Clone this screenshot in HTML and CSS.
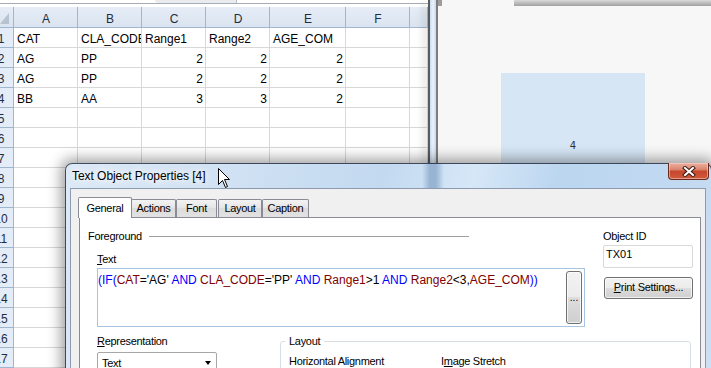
FILE: index.html
```html
<!DOCTYPE html>
<html>
<head>
<meta charset="utf-8">
<link rel="stylesheet" href="styles.css">
</head>
<body>
<div class="screen">
  <div class="excel">
    <div class="xl-top"><div class="xl-fbox"></div></div>
    <div class="sheet">
      <div class="corner"><svg width="13" height="20" viewBox="0 0 13 20"><polygon points="0,17 9,17 9,6" fill="#b8c3d1"/></svg></div>
      <div class="ch">A</div><div class="ch">B</div><div class="ch">C</div><div class="ch">D</div><div class="ch">E</div><div class="ch">F</div><div class="ch"></div>

      <div class="rh"><span>1</span></div><div>CAT</div><div>CLA_CODE</div><div>Range1</div><div>Range2</div><div>AGE_COM</div><div></div><div></div>
      <div class="rh"><span>2</span></div><div>AG</div><div>PP</div><div class="n">2</div><div class="n">2</div><div class="n">2</div><div></div><div></div>
      <div class="rh"><span>3</span></div><div>AG</div><div>PP</div><div class="n">2</div><div class="n">2</div><div class="n">2</div><div></div><div></div>
      <div class="rh"><span>4</span></div><div>BB</div><div>AA</div><div class="n">3</div><div class="n">3</div><div class="n">2</div><div></div><div></div>
      <div class="rh"><span>5</span></div><div></div><div></div><div></div><div></div><div></div><div></div><div></div>
      <div class="rh"><span>6</span></div><div></div><div></div><div></div><div></div><div></div><div></div><div></div>
      <div class="rh"><span>7</span></div><div></div><div></div><div></div><div></div><div></div><div></div><div></div>
      <div class="rh"><span>8</span></div><div></div><div></div><div></div><div></div><div></div><div></div><div></div>
      <div class="rh"><span>9</span></div><div></div><div></div><div></div><div></div><div></div><div></div><div></div>
      <div class="rh"><span>10</span></div><div></div><div></div><div></div><div></div><div></div><div></div><div></div>
      <div class="rh"><span>11</span></div><div></div><div></div><div></div><div></div><div></div><div></div><div></div>
      <div class="rh"><span>12</span></div><div></div><div></div><div></div><div></div><div></div><div></div><div></div>
      <div class="rh"><span>13</span></div><div></div><div></div><div></div><div></div><div></div><div></div><div></div>
      <div class="rh"><span>14</span></div><div></div><div></div><div></div><div></div><div></div><div></div><div></div>
      <div class="rh"><span>15</span></div><div></div><div></div><div></div><div></div><div></div><div></div><div></div>
      <div class="rh"><span>16</span></div><div></div><div></div><div></div><div></div><div></div><div></div><div></div>
      <div class="rh"><span>17</span></div><div></div><div></div><div></div><div></div><div></div><div></div><div></div>
      <div class="rh"><span>18</span></div><div></div><div></div><div></div><div></div><div></div><div></div><div></div>
    </div>
  </div>
  <div class="divider"></div>
  <div class="qv">
    <div class="qv-top"><div class="qv-top-a"></div><div class="qv-top-b"></div><div class="qv-top-c"></div></div>
    <div class="qv-box"><span>4</span></div>
  </div>

  <div class="dialog">
    <div class="titlebar">
      <span class="title">Text Object Properties [4]</span>
      <div class="close"><svg width="14" height="11" viewBox="0 0 14 11"><path d="M3 2 L11 9 M11 2 L3 9" stroke="#3b1a12" stroke-width="4" stroke-linecap="square"/><path d="M3 2 L11 9 M11 2 L3 9" stroke="#fff" stroke-width="2" stroke-linecap="square"/></svg></div>
    </div>
    <div class="client">
      <div class="tabs">
        <div class="tab sel">General</div>
        <div class="tab t-actions">Actions</div>
        <div class="tab t-font">Font</div>
        <div class="tab t-layout">Layout</div>
        <div class="tab t-caption">Caption</div>
      </div>
      <div class="panel">
        <div class="left">
          <div class="fg-row"><span>Foreground</span><div class="fg-line"></div></div>
          <div class="indent">
            <div class="lbl text-lbl"><u>T</u>ext</div>
            <div class="textbox">
              <div class="expr"><span class="kw">(IF(</span><span class="fld">CAT</span><span class="op">='AG'</span><span class="kw"> AND </span><span class="fld">CLA_CODE</span><span class="op">='PP'</span><span class="kw"> AND </span><span class="fld">Range1</span><span class="op">&gt;1</span><span class="kw"> AND </span><span class="fld">Range2</span><span class="op">&lt;3,</span><span class="fld">AGE_COM</span><span class="kw">))</span></div>
              <div class="ell">...</div>
            </div>
            <div class="rep-row">
              <div class="rep">
                <div class="lbl"><u>R</u>epresentation</div>
                <div class="select"><span>Text</span><span class="arrow"></span></div>
              </div>
              <fieldset class="group">
                <legend>Layout</legend>
                <div class="group-row"><span class="ha">Horizontal Alignment</span><span>I<u>m</u>age Stretch</span></div>
              </fieldset>
            </div>
          </div>
        </div>
        <div class="right">
          <div class="lbl">Ob<u>j</u>ect ID</div>
          <div class="oid-input">TX01</div>
          <div class="print-btn"><u>P</u>rint Settings...</div>
        </div>
      </div>
    </div>
  </div>

  <svg class="cursor" width="13" height="21" viewBox="0 0 13 21"><path d="M0.5 0.5 V16.5 L4.5 12.5 L7.5 19.5 L9.5 18.5 L6.5 11.5 H11.5 Z" fill="#fff" stroke="#000" stroke-linejoin="miter"/></svg>
</div>
</body>
</html>
```

FILE: styles.css
```css
html, body {
  margin: 0;
  padding: 0;
}
body {
  width: 711px;
  height: 368px;
  overflow: hidden;
  font-family: "Liberation Sans", Arial, sans-serif;
}
.screen {
  display: flex;
  width: 711px;
  height: 368px;
  position: relative;
  overflow: hidden;
  background: #fff;
}

/* ---------- Excel ---------- */
.excel {
  width: 428px;
  flex: none;
  background: #fff;
}
.xl-top {
  height: 3px;
  border-bottom: 1px solid #a7adb5;
  display: flex;
}
.xl-fbox {
  margin-left: 155px;
  width: 81px;
  height: 3px;
  background: #e9ebee;
  border-right: 1px solid #b9bec5;
  border-radius: 0 0 0 3px;
}
.sheet {
  margin-top: 3px;
  display: grid;
  grid-template-columns: 14px 64px 64px 64px 64px 76px 64px 18px;
  grid-template-rows: 21px;
  grid-auto-rows: 20px;
  font-size: 12px;
  color: #000;
}
.sheet > div {
  box-sizing: border-box;
  border-right: 1px solid #d8d8d8;
  border-bottom: 1px solid #d8d8d8;
  overflow: hidden;
  white-space: nowrap;
  line-height: 16px;
  padding: 3px 2px 0 3px;
}
.sheet > .n {
  text-align: right;
}
.sheet > .ch {
  background: linear-gradient(#e6edf7, #dae4f0);
  border-color: #9eb6ce;
  text-align: center;
  padding-top: 4px;
  color: #1f2d3d;
}
.sheet > .corner {
  background: linear-gradient(#e6edf7, #dae4f0);
  border-color: #9eb6ce;
  padding: 0;
}
.corner svg {
  display: block;
}
.sheet > .rh {
  background: #e4ecf7;
  border-color: #9eb6ce;
  padding: 3px 0 0 0;
  color: #1f2d3d;
}
.rh span {
  display: block;
  width: 26px;
  margin-left: -12px;
  text-align: center;
}

.divider {
  width: 10px;
  flex: none;
  background: linear-gradient(to right, #5a5a5a 0, #5a5a5a 2px, #cadcf1 2px, #e9f2fc 5px, #c6d9ee 8px, #7d7d7d 8px, #7d7d7d 10px);
  box-shadow: -7px 0 8px -4px rgba(0, 0, 0, 0.35);
  position: relative;
  z-index: 1;
}

/* ---------- QlikView sheet ---------- */
.qv {
  flex: 1;
  background: #f7f7f7;
}
.qv-top {
  display: flex;
  height: 6px;
}
.qv-top-a {
  width: 4px;
  background: #9c9c9c;
}
.qv-top-b {
  width: 72px;
}
.qv-top-c {
  flex: 1;
  background: linear-gradient(#dadada, #a0a0a0);
}
.qv-box {
  margin: 67px 0 0 63px;
  width: 144px;
  height: 144px;
  background: #d6e6f5;
  display: flex;
  align-items: center;
  justify-content: center;
  font-family: "DejaVu Sans", sans-serif;
  font-size: 10px;
  color: #333;
}

/* ---------- Dialog ---------- */
.dialog {
  position: absolute;
  left: 65px;
  top: 163px;
  width: 647px;
  height: 240px;
  box-sizing: border-box;
  border: 1px solid rgba(35, 45, 65, 0.85);
  border-radius: 7px 7px 0 0;
  background:
    linear-gradient(to right, rgba(120, 160, 200, 0) 0, rgba(120, 160, 200, 0) 356px, rgba(85, 125, 170, 0.45) 364px, rgba(85, 125, 170, 0.45) 370px, rgba(120, 160, 200, 0) 378px),
    linear-gradient(105deg, #dce9f6 0%, #cfe1f3 25%, #c3d9f0 45%, #d6e7f7 58%, #bcd6f0 70%, #c2d9f1 88%, #cde0f4 100%);
  box-shadow: 0 0 14px 4px rgba(0, 0, 0, 0.38);
  z-index: 2;
  font-size: 11px;
  color: #000;
}
.titlebar {
  height: 24px;
  display: flex;
  align-items: center;
  padding-left: 6px;
}
.title {
  font-size: 12px;
  letter-spacing: -0.05px;
  text-shadow: 0 0 6px #fff, 0 0 10px #fff, 0 0 14px rgba(255, 255, 255, 0.9);
}
.close {
  margin-left: auto;
  margin-right: 2px;
  align-self: flex-start;
  margin-top: -1px;
  width: 41px;
  height: 17px;
  box-sizing: border-box;
  border: 1px solid #6a2a1e;
  border-top: none;
  border-radius: 0 0 4px 4px;
  background: linear-gradient(#eab0a2 0%, #dc8670 40%, #c7472d 52%, #cf5a3c 100%);
  display: flex;
  align-items: center;
  justify-content: center;
  box-shadow: inset 0 0 0 1px rgba(255, 220, 210, 0.5);
}
.close svg {
  display: block;
}
.client {
  margin: 0 5px 0 4px;
  height: 220px;
  box-sizing: border-box;
  border: 1px solid #8c9bb0;
  background: #f0f0f0;
  padding: 8px 4px 0 8px;
  letter-spacing: -0.3px;
}
.tabs {
  display: flex;
  align-items: flex-end;
  height: 20px;
  margin-left: -1px;
}
.tab {
  box-sizing: border-box;
  height: 18px;
  border: 1px solid #898c95;
  border-bottom: none;
  background: linear-gradient(#f3f3f3, #e4e4e4 50%, #dcdcdc 50%, #e2e2e2);
  text-align: center;
  line-height: 14px;
  padding-top: 1px;
  border-radius: 2px 2px 0 0;
}
.tab.sel {
  width: 54px;
  height: 21px;
  margin-bottom: -1px;
  background: #fff;
  padding-top: 3px;
  position: relative;
  z-index: 1;
}
.t-actions {
  width: 45px;
  margin-left: -1px;
}
.t-font {
  width: 41px;
}
.t-layout {
  width: 44px;
  margin-left: 1px;
}
.t-caption {
  width: 47px;
}
.panel {
  height: 180px;
  box-sizing: border-box;
  border: 1px solid #898c95;
  background: #fff;
  padding: 11px 0 0 8px;
  display: flex;
}
.left {
  width: 497px;
  flex: none;
}
.right {
  margin-left: 18px;
  width: 90px;
  flex: none;
}
.fg-row {
  display: flex;
  align-items: center;
  height: 14px;
  line-height: 14px;
}
.fg-line {
  flex: none;
  width: 320px;
  height: 1px;
  background: #a0a0a0;
  margin-left: 7px;
}
.indent {
  margin-left: 9px;
}
.lbl {
  line-height: 14px;
  height: 14px;
  white-space: nowrap;
}
.text-lbl {
  margin-top: 9px;
}
.textbox {
  margin-top: 2px;
  width: 488px;
  height: 59px;
  box-sizing: border-box;
  border: 1px solid #a9c4e2;
  display: flex;
}
.expr {
  flex: 1;
  padding: 4px 0 0 0;
  font-size: 12px;
  line-height: 14px;
  letter-spacing: 0;
  white-space: nowrap;
}
.kw {
  color: #0000ff;
}
.fld {
  color: #800000;
}
.op {
  color: #000;
}
.ell {
  width: 16px;
  height: 53px;
  margin: 2px 2px 0 0;
  box-sizing: border-box;
  border: 1px solid #707070;
  border-radius: 3px;
  background: linear-gradient(#f2f2f2, #ebebeb 50%, #dddddd 50%, #cfcfcf);
  box-shadow: inset 0 0 0 1px rgba(255, 255, 255, 0.7);
  display: flex;
  align-items: center;
  justify-content: center;
  letter-spacing: 0;
  font-size: 10px;
}
.rep-row {
  display: flex;
  margin-top: 7px;
}
.rep {
  width: 120px;
  flex: none;
}
.select {
  margin-top: 4px;
  height: 22px;
  box-sizing: border-box;
  border: 1px solid #a7a7a7;
  border-radius: 2px;
  background: #fff;
  display: flex;
  align-items: center;
  justify-content: space-between;
  padding: 0 5px 0 4px;
  line-height: 14px;
}
.arrow {
  width: 0;
  height: 0;
  border-left: 3.5px solid transparent;
  border-right: 3.5px solid transparent;
  border-top: 4px solid #000;
}
.group {
  flex: none;
  margin: 0 0 0 63px;
  padding: 0 0 0 4px;
  width: 411px;
  height: 60px;
  box-sizing: border-box;
  border: 1px solid #d5dfe5;
  border-radius: 3px;
  min-width: 0;
}
.group legend {
  padding: 0 4px;
  line-height: 14px;
}
.group-row {
  display: flex;
  margin: 6px 0 0 4px;
  line-height: 14px;
  white-space: nowrap;
}
.ha {
  width: 152px;
}
.oid-input {
  margin-top: 2px;
  height: 23px;
  box-sizing: border-box;
  border: 1px solid #d9d9d9;
  border-radius: 2px;
  background: #fff;
  padding-left: 2px;
  line-height: 17px;
  letter-spacing: 0;
}
.print-btn {
  margin: 9px 0 0 1px;
  width: 89px;
  height: 22px;
  box-sizing: border-box;
  border: 1px solid #707070;
  border-radius: 3px;
  background: linear-gradient(#f2f2f2, #ebebeb 50%, #dddddd 50%, #cfcfcf);
  box-shadow: inset 0 0 0 1px rgba(255, 255, 255, 0.7);
  text-align: center;
  line-height: 19px;
  white-space: nowrap;
}

.cursor {
  position: absolute;
  left: 218px;
  top: 168px;
  z-index: 3;
}
```
